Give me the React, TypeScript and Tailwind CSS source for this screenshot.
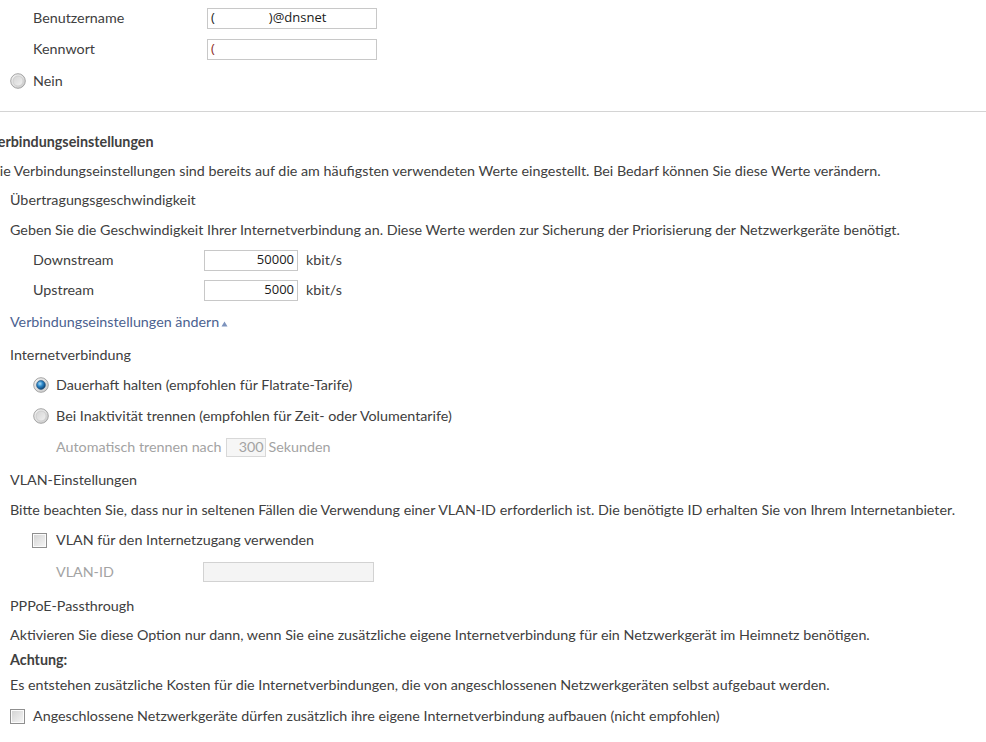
import type { ReactNode } from "react";

function Radio({ checked = false }: { checked?: boolean }) {
  return (
    <svg width="16" height="16" viewBox="0 0 16 16" className="shrink-0">
      <defs>
        <linearGradient id="radioOuter" x1="0" y1="0" x2="1" y2="1">
          <stop offset="0" stopColor="#f7f7f7" />
          <stop offset="1" stopColor="#c9c9c9" />
        </linearGradient>
        <linearGradient id="radioInner" x1="0" y1="0" x2="1" y2="1">
          <stop offset="0" stopColor="#d4d4d4" />
          <stop offset="1" stopColor="#f1f1f1" />
        </linearGradient>
        <radialGradient id="radioDot" cx="0.38" cy="0.35" r="0.7">
          <stop offset="0" stopColor="#a9dcf7" />
          <stop offset="0.45" stopColor="#2b86c8" />
          <stop offset="1" stopColor="#0c3a66" />
        </radialGradient>
      </defs>
      <circle cx="8" cy="8" r="7.3" fill="url(#radioOuter)" stroke="#9b9b9b" strokeWidth="0.9" />
      <circle cx="8" cy="8" r="5" fill="url(#radioInner)" stroke="#c4c4c4" strokeWidth="0.6" />
      {checked && <circle cx="8" cy="8" r="4.4" fill="url(#radioDot)" stroke="#1b4f7e" strokeWidth="0.6" />}
    </svg>
  );
}

function Checkbox() {
  return (
    <div className="h-[15px] w-[15px] shrink-0 border border-[#8f8f8f] bg-linear-to-br from-[#d2d2d2] to-[#f7f7f7] shadow-[inset_0_0_0_1px_#fbfbfb]" />
  );
}

function Row({ className = "", children }: { className?: string; children: ReactNode }) {
  return <div className={`flex h-[20px] items-center whitespace-nowrap ${className}`}>{children}</div>;
}

function Field({ className = "", children }: { className?: string; children?: ReactNode }) {
  return (
    <div
      className={`flex h-[21px] items-center border border-[#c8c8c8] bg-white px-[3px] text-[13px] text-[#1a1a1a] [font-family:'Open_Sans',sans-serif] ${className}`}
    >
      {children}
    </div>
  );
}

export default function App() {
  return (
    <div className="h-[742px] w-[986px] overflow-hidden bg-white pt-[8px] text-[14.3px] text-[#404040] [font-family:Lato,sans-serif]">
      <Row className="pl-[33px]">
        <span className="w-[174px]">Benutzername</span>
        <Field className="w-[170px]">
          <span>(</span>
          <span className="inline-block w-[54px]" />
          <span>)@dnsnet</span>
        </Field>
      </Row>
      <Row className="mt-[11px] pl-[33px]">
        <span className="w-[174px]">Kennwort</span>
        <Field className="w-[170px]">
          <span className="text-[#8c2a22]">(</span>
        </Field>
      </Row>
      <Row className="mt-[12px] gap-[7px] pl-[10px]">
        <Radio />
        <span>Nein</span>
      </Row>

      <div className="mt-[20px] h-px bg-[#d4d4d4]" />

      <Row className="-ml-[11px] mt-[20px] font-bold">Verbindungseinstellungen</Row>
      <Row className="-ml-[11px] mt-[9px]">
        Die Verbindungseinstellungen sind bereits auf die am häufigsten verwendeten Werte eingestellt. Bei Bedarf können Sie diese Werte verändern.
      </Row>
      <Row className="mt-[9px] pl-[10px]">Übertragungsgeschwindigkeit</Row>
      <Row className="mt-[10px] pl-[10px]">
        Geben Sie die Geschwindigkeit Ihrer Internetverbindung an. Diese Werte werden zur Sicherung der Priorisierung der Netzwerkgeräte benötigt.
      </Row>
      <Row className="mt-[10px] pl-[33px]">
        <span className="w-[171px]">Downstream</span>
        <Field className="w-[94px] justify-end">50000</Field>
        <span className="ml-[8px]">kbit/s</span>
      </Row>
      <Row className="mt-[10px] pl-[33px]">
        <span className="w-[171px]">Upstream</span>
        <Field className="w-[94px] justify-end">5000</Field>
        <span className="ml-[8px]">kbit/s</span>
      </Row>
      <Row className="mt-[12px] pl-[10px] text-[#4b6290]">
        Verbindungseinstellungen ändern
        <svg width="7" height="6" viewBox="0 0 7 6" className="ml-[2px] mt-[3px]">
          <path d="M3.5 0.5 L6.5 5.5 L0.5 5.5 Z" fill="#7d93bd" />
        </svg>
      </Row>

      <Row className="mt-[13px] pl-[10px]">Internetverbindung</Row>
      <Row className="mt-[10px] gap-[7px] pl-[33px]">
        <Radio checked />
        <span>Dauerhaft halten (empfohlen für Flatrate-Tarife)</span>
      </Row>
      <Row className="mt-[11px] gap-[7px] pl-[33px]">
        <Radio />
        <span>Bei Inaktivität trennen (empfohlen für Zeit- oder Volumentarife)</span>
      </Row>
      <Row className="mt-[11px] pl-[56px] text-[#a3a3a3]">
        <span>Automatisch trennen nach</span>
        <div className="ml-[4px] flex h-[19px] w-[40px] items-center justify-end border border-[#d8d8d8] bg-[#f6f6f6] pr-[1px] text-[#a3a3a3]">
          300
        </div>
        <span className="ml-[3px]">Sekunden</span>
      </Row>

      <Row className="mt-[13px] pl-[10px]">VLAN-Einstellungen</Row>
      <Row className="mt-[10px] pl-[10px]">
        Bitte beachten Sie, dass nur in seltenen Fällen die Verwendung einer VLAN-ID erforderlich ist. Die benötigte ID erhalten Sie von Ihrem Internetanbieter.
      </Row>
      <Row className="mt-[10px] gap-[9px] pl-[32px]">
        <Checkbox />
        <span>VLAN für den Internetzugang verwenden</span>
      </Row>
      <Row className="mt-[12px] pl-[56px] text-[#a3a3a3]">
        <span className="w-[147px]">VLAN-ID</span>
        <div className="h-[20px] w-[171px] border border-[#d2d2d2] bg-[#f4f4f4]" />
      </Row>

      <Row className="mt-[14px] pl-[10px]">PPPoE-Passthrough</Row>
      <Row className="mt-[9px] pl-[10px]">
        Aktivieren Sie diese Option nur dann, wenn Sie eine zusätzliche eigene Internetverbindung für ein Netzwerkgerät im Heimnetz benötigen.
      </Row>
      <Row className="mt-[5px] pl-[10px] font-bold">Achtung:</Row>
      <Row className="mt-[5px] pl-[10px]">
        Es entstehen zusätzliche Kosten für die Internetverbindungen, die von angeschlossenen Netzwerkgeräten selbst aufgebaut werden.
      </Row>
      <Row className="mt-[11px] gap-[8px] pl-[10px]">
        <Checkbox />
        <span>Angeschlossene Netzwerkgeräte dürfen zusätzlich ihre eigene Internetverbindung aufbauen (nicht empfohlen)</span>
      </Row>
    </div>
  );
}
